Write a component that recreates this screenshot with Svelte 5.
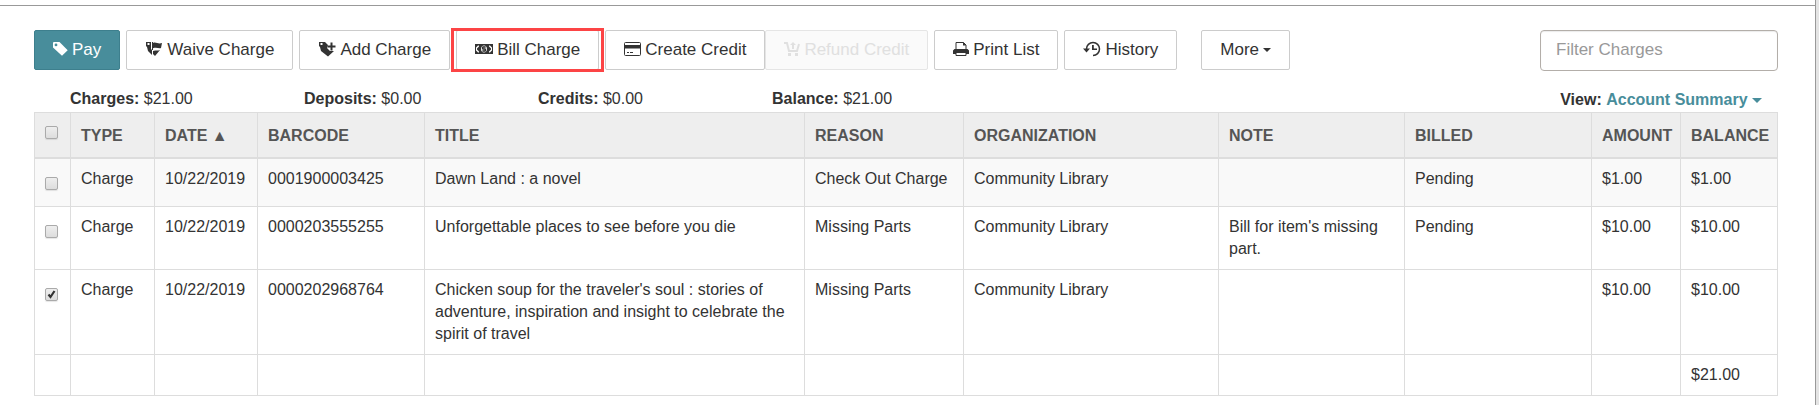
<script lang="ts">
	let filter = "";

	const actions = [
		{ label: "Pay", icon: "tag", look: "primary" },
		{ label: "Waive Charge", icon: "waive", look: "" },
		{ label: "Add Charge", icon: "add", look: "" },
		{ label: "Bill Charge", icon: "bill", look: "marked" },
		{ label: "Create Credit", icon: "card", look: "" },
		{ label: "Refund Credit", icon: "cart", look: "joined" },
		{ label: "Print List", icon: "print", look: "" },
		{ label: "History", icon: "history", look: "" },
		{ label: "More", icon: "", look: "more" },
	];

	const totals = [
		{ label: "Charges:", value: "$21.00" },
		{ label: "Deposits:", value: "$0.00" },
		{ label: "Credits:", value: "$0.00" },
		{ label: "Balance:", value: "$21.00" },
	];

	const columns = [
		{ name: "TYPE", id: "type" },
		{ name: "DATE ▲", id: "date" },
		{ name: "BARCODE", id: "barcode" },
		{ name: "TITLE", id: "title" },
		{ name: "REASON", id: "reason" },
		{ name: "ORGANIZATION", id: "org" },
		{ name: "NOTE", id: "note" },
		{ name: "BILLED", id: "billed" },
		{ name: "AMOUNT", id: "amount" },
		{ name: "BALANCE", id: "balance" },
	];

	let rows = [
		{
			checked: false,
			cells: ["Charge", "10/22/2019", "0001900003425", "Dawn Land : a novel", "Check Out Charge", "Community Library", "", "Pending", "$1.00", "$1.00"],
		},
		{
			checked: false,
			cells: ["Charge", "10/22/2019", "0000203555255", "Unforgettable places to see before you die", "Missing Parts", "Community Library", "Bill for item's missing part.", "Pending", "$10.00", "$10.00"],
		},
		{
			checked: true,
			cells: ["Charge", "10/22/2019", "0000202968764", "Chicken soup for the traveler's soul : stories of adventure, inspiration and insight to celebrate the spirit of travel", "Missing Parts", "Community Library", "", "", "$10.00", "$10.00"],
		},
	];

	const toggleAll = (e: any) => {
		rows = rows.map((row) => ({ ...row, checked: e.target.checked }));
	};
</script>

<main>
	<div class="strip"></div>
	<div class="content">
		<div class="toolbar">
			{#each actions as action}
				<button type="button" class="btn {action.look}" disabled={action.icon === "cart"}>
					{#if action.icon === "tag"}
						<svg width="15" height="16" viewBox="0 0 15 16">
							<path fill-rule="evenodd" d="M0 2Q0 1 1 1h5.500l8.200 8.200-5.700 5.600L0 6.500zM3 2.500a1.400 1.400 0 1 0 0 2.800 1.400 1.400 0 0 0 0-2.800z" />
						</svg>
					{:else if action.icon === "waive"}
						<svg width="18" height="16" viewBox="0 0 18 16">
							<path fill-rule="evenodd" d="M1 1h5v7l1 1v5L3 10 2 6 1 5zM2.500 2v2h2V2z" />
							<path d="M7 1h1v1c3-1.500 5 1.500 9 0l-1 5c-2 1-4-1-8 .3V9H7z" />
							<path d="M8 10c3-1 5 0 7-1l-5 6-2-2z" />
						</svg>
					{:else if action.icon === "add"}
						<svg width="18" height="16" viewBox="0 0 18 16">
							<path fill-rule="evenodd" d="M1 1h6l3 3-1 3 3 3h4l-6 5.500L3 10 2 6 1 5zM2.500 2v2h2V2z" />
							<path d="M12.500 1.500h2v3h3v2h-3v3h-2v-3h-3v-2h3z" />
						</svg>
					{:else if action.icon === "bill"}
						<svg width="18" height="16" viewBox="0 0 18 16">
							<path fill-rule="evenodd" d="M0 3h18v10H0zM1 6.500v3l2 2h1v-1l-2-2v-1l2-2v-1H3zM17 6.500v3l-2 2h-1v-1l2-2v-1l-2-2v-1h1zM9 4.500C7.300 4.500 6 6 6 8s1.300 3.500 3 3.500 3-1.500 3-3.500-1.300-3.500-3-3.500z" />
							<path d="M11 6H7.500v2h3v2H7M9 5v6" fill="none" stroke="currentColor" stroke-width="1.200" />
						</svg>
					{:else if action.icon === "card"}
						<svg width="17" height="16" viewBox="0 0 17 16">
							<rect x=".5" y="1.500" width="16" height="13" rx="1" fill="none" stroke="currentColor" />
							<path d="M0 4h17v3.500H0zM3 11h2v1H3zM6 11h3v1H6z" />
						</svg>
					{:else if action.icon === "cart"}
						<svg width="16" height="16" viewBox="0 0 16 16">
							<path d="M0 2h3l2 8h8l2-7" fill="none" stroke="currentColor" stroke-width="2" />
							<path d="M9 1l3 3h-2v4H8V4H6zM4 12h3v3H4zM11 12h3v3h-3z" />
						</svg>
					{:else if action.icon === "print"}
						<svg width="16" height="16" viewBox="0 0 16 16">
							<path d="M3 9V1.500h7.500L13 4v5" fill="none" stroke="currentColor" />
							<path d="M10 1v3.500h3zM1.500 8h13L16 9.500V13H0V9.500z" />
							<path d="M3 11.500h10v3H3z" fill="#fff" stroke="currentColor" />
						</svg>
					{:else if action.icon === "history"}
						<svg width="18" height="16" viewBox="0 0 18 16">
							<path d="M3.500 8A6.500 6.500 0 1 1 10 14.500" fill="none" stroke="currentColor" stroke-width="1.500" />
							<path d="M0 7.500h7l-3.500 4zM9 4h1.800v3.500H14V9H9z" />
						</svg>
					{/if}
					<span>{action.label}</span>
					{#if action.look === "more"}
						<span class="caret"></span>
					{/if}
				</button>
			{/each}
			<input class="filter" type="text" placeholder="Filter Charges" aria-label="Filter Charges" bind:value={filter} />
		</div>

		<div class="summary">
			{#each totals as total}
				<div class="total"><b>{total.label}</b> {total.value}</div>
			{/each}
			<div class="view">
				<b>View:</b>
				<a href="#summary">Account Summary <span class="caret"></span></a>
			</div>
		</div>

		<table>
			<colgroup>
				<col class="check" />
				{#each columns as column}
					<col class={column.id} />
				{/each}
			</colgroup>
			<thead>
				<tr>
					<th class="pick"><input type="checkbox" aria-label="Select all charges" on:change={toggleAll} /></th>
					{#each columns as column}
						<th>{column.name}</th>
					{/each}
				</tr>
			</thead>
			<tbody>
				{#each rows as row}
					<tr>
						<td class="pick"><input type="checkbox" aria-label="Select charge {row.cells[2]}" bind:checked={row.checked} /></td>
						{#each row.cells as cell}
							<td>{cell}</td>
						{/each}
					</tr>
				{/each}
			</tbody>
			<tfoot>
				<tr>
					<td></td>
					{#each columns as column}
						<td>{column.id === "balance" ? "$21.00" : ""}</td>
					{/each}
				</tr>
			</tfoot>
		</table>
	</div>
</main>

<style>
	:global(body) {
		margin: 0;
		background: #e4e4e4;
	}

	* {
		box-sizing: border-box;
	}

	main {
		min-height: 100vh;
		margin-right: 3px;

		border-right: solid 1px #999;

		background: #fff;
		color: #333;

		font-family: "Liberation Sans", Arial, sans-serif;
		font-size: 16px;
		line-height: 22px;
	}

	.strip {
		height: 6px;
		border-bottom: solid 1px #999;
	}

	.content {
		padding: 24px 37px 8px 34px;
	}

	.toolbar {
		display: flex;
		align-items: flex-start;
		gap: 6px;
	}

	.btn {
		display: flex;
		align-items: center;
		justify-content: center;
		gap: 4px;

		height: 40px;
		padding: 0 18px;

		border: solid 1px #ccc;
		border-radius: 2px;

		background: #fff;
		color: #333;

		font-family: inherit;
		font-size: 17px;
		line-height: 24px;
		white-space: nowrap;

		cursor: pointer;
	}

	.btn svg {
		flex: none;
		margin-bottom: 2px;
		fill: currentColor;
	}

	.primary {
		border-color: #3d7f8d;
		background: #488d9b;
		color: #fff;
	}

	.marked {
		position: relative;
	}

	/* red frame round the highlighted action */
	.marked::after {
		content: "";

		position: absolute;
		inset: -3px -6px;

		border: solid 3px #fc4445;
	}

	.joined {
		margin-left: -6px;
	}

	.btn:disabled {
		border-color: #e5e5e5;
		background: #fafafa;
		color: #e0e0e0;
		cursor: default;
	}

	.more {
		margin-left: 18px;
	}

	.caret {
		display: inline-block;
		vertical-align: middle;

		border-top: solid 4px currentColor;
		border-left: solid 4px transparent;
		border-right: solid 4px transparent;
	}

	.filter {
		width: 238px;
		height: 41px;
		margin-left: auto;
		padding: 0 15px 2px;

		border: solid 1px #b3aea9;
		border-radius: 4px;
		box-shadow: inset 0 1px 1px rgba(0, 0, 0, 0.08);

		color: #333;

		font-family: inherit;
		font-size: 17px;
	}

	.filter::placeholder {
		color: #999;
	}

	.summary {
		display: flex;

		margin-top: 17px;
		padding-left: 36px;
	}

	.total {
		width: 234px;
		height: 24px;
	}

	.view {
		margin-left: auto;
		padding-top: 1px;
		padding-right: 16px;
	}

	.view a {
		color: #488d9b;
		font-weight: bold;
		text-decoration: none;
	}

	.view .caret {
		border-width: 5px 5px 0;
	}

	table {
		width: 100%;

		border-collapse: collapse;
		table-layout: fixed;
	}

	th,
	td {
		padding: 9px 8px 9px 10px;

		border: solid 1px #ddd;

		text-align: left;
		vertical-align: top;
	}

	th {
		padding-top: 12px;
		padding-bottom: 10px;

		border-bottom-width: 2px;

		background: #eee;
		color: #555;
	}

	tbody tr:first-child {
		height: 48px;
		background: #f9f9f9;
	}

	th.pick {
		padding-top: 13px;
	}

	td.pick {
		padding-top: 18px;
	}

	.pick input {
		appearance: none;
		display: block;

		width: 13px;
		height: 13px;
		margin: 0;

		border: solid 1px #aaa;
		border-radius: 2px;
		box-shadow: 0 1px 1px rgba(0, 0, 0, 0.1);

		background: linear-gradient(#eee, #ddd);
	}

	.pick input:checked {
		background: url("data:image/svg+xml,%3Csvg xmlns='http://www.w3.org/2000/svg' viewBox='0 0 11 11'%3E%3Cpath d='M2.500 5.500l2 2.500 4-6' fill='none' stroke='%23333' stroke-width='2.200'/%3E%3C/svg%3E"), linear-gradient(#eee, #ddd);
	}

	.check {
		width: 36px;
	}

	.type {
		width: 84px;
	}

	.date {
		width: 103px;
	}

	.barcode {
		width: 167px;
	}

	.reason {
		width: 159px;
	}

	.org {
		width: 255px;
	}

	.note {
		width: 186px;
	}

	.billed {
		width: 187px;
	}

	.amount {
		width: 89px;
	}

	.balance {
		width: 97px;
	}
</style>
